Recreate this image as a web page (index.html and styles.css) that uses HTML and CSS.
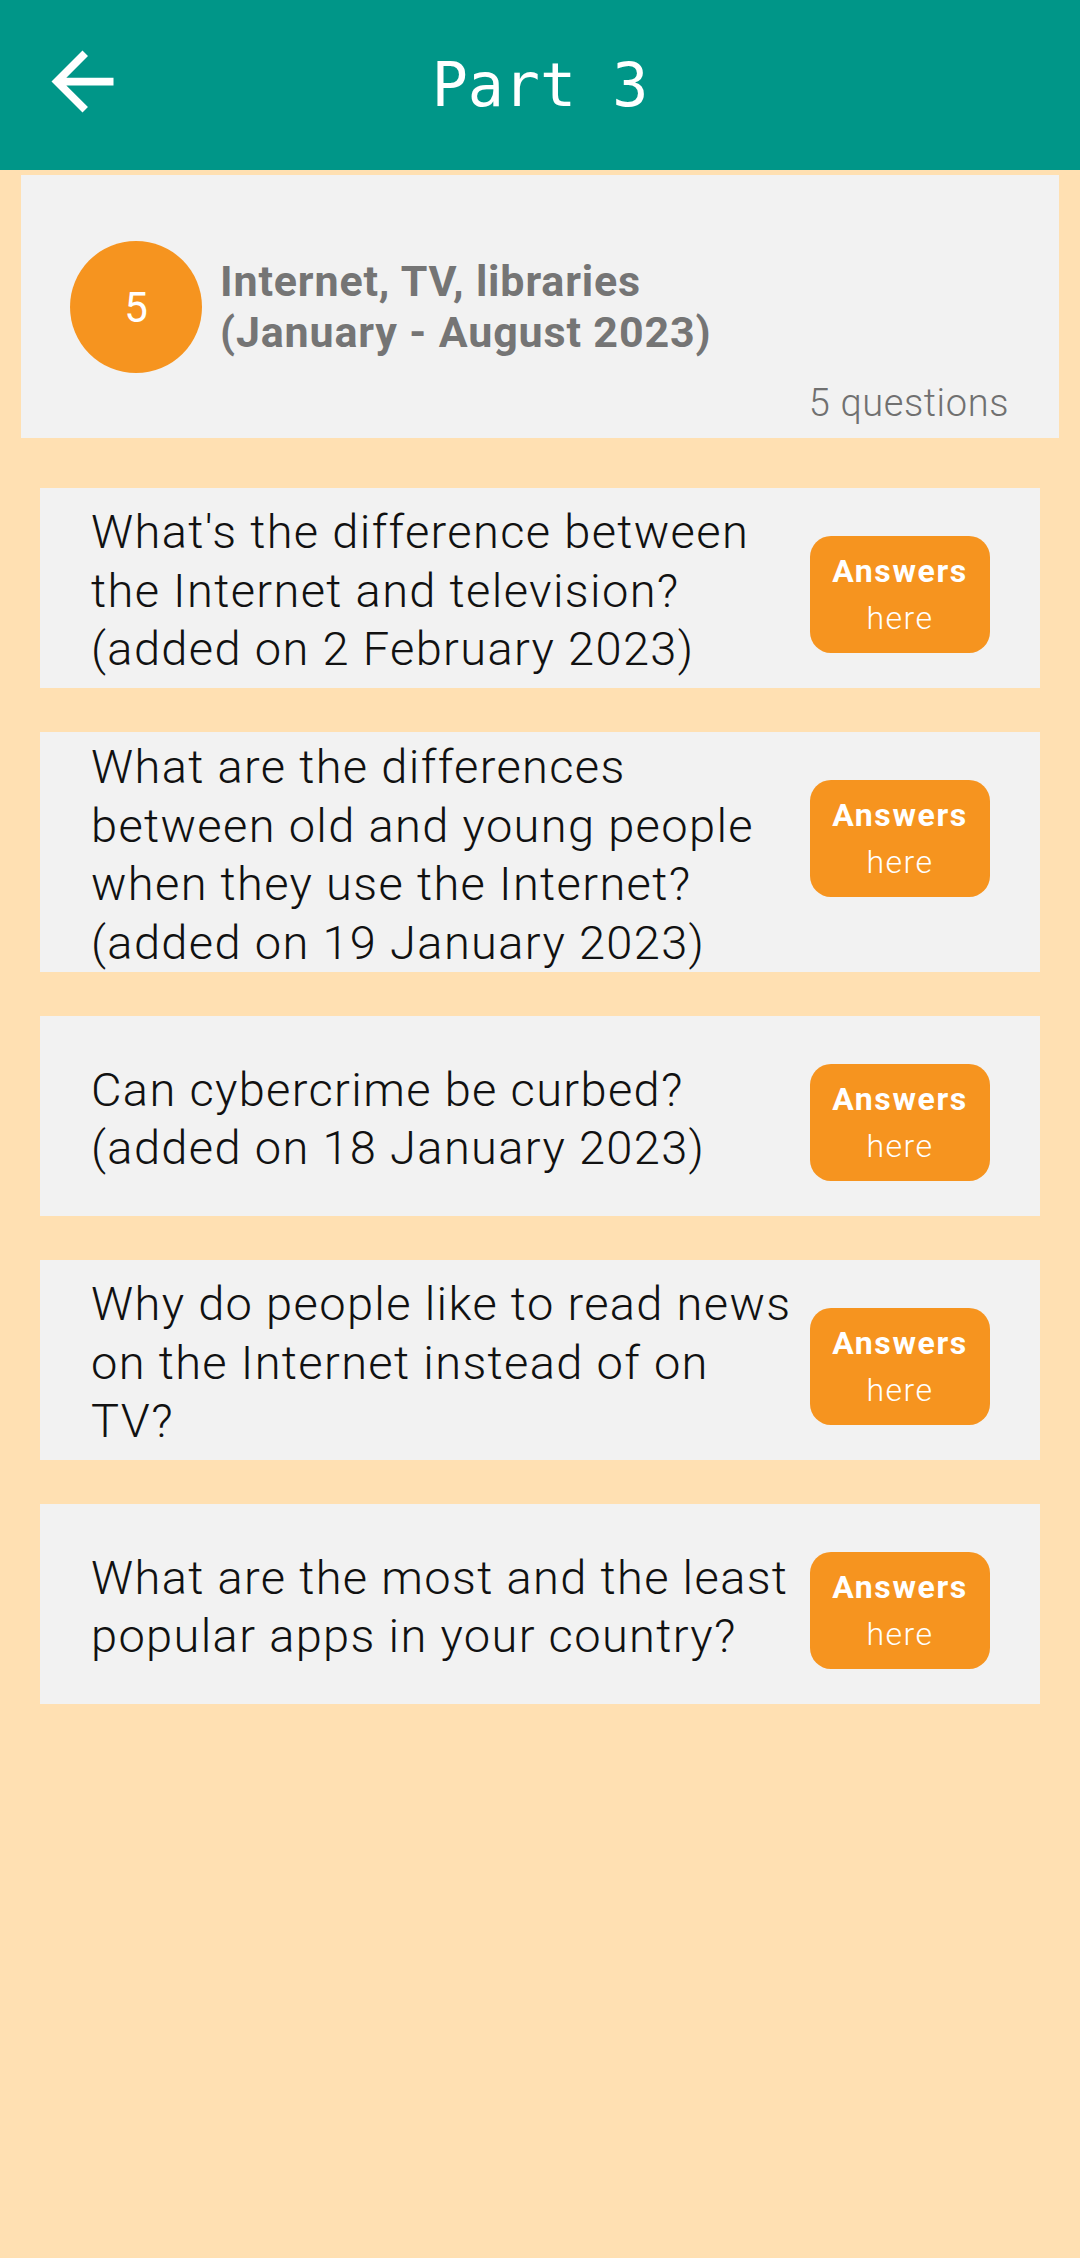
FILE: index.html
```html
<!DOCTYPE html>
<html lang="en">
<head>
<meta charset="utf-8">
<title>Part 3</title>
<link rel="stylesheet" href="styles.css">
</head>
<body>
<header class="topbar">
  <button class="back" aria-label="Back">
    <svg viewBox="0 0 24 24" width="93" height="93"><path fill="#fff" d="M20 11H7.83l5.59-5.59L12 4l-8 8 8 8 1.41-1.41L7.83 13H20v-2z"/></svg>
  </button>
  <h1 class="title">Part 3</h1>
</header>
<main class="content">
  <section class="topic">
    <div class="topic-row">
      <div class="badge">5</div>
      <div class="topic-name">Internet, TV, libraries<br>(January - August 2023)</div>
    </div>
    <div class="topic-count">5 questions</div>
  </section>
  <ul class="questions">
    <li class="q-card">
      <p class="q-text">What's the difference between<br>the Internet and television?<br>(added on 2 February 2023)</p>
      <a class="answers"><span class="a1">Answers</span><span class="a2">here</span></a>
    </li>
    <li class="q-card">
      <p class="q-text">What are the differences<br>between old and young people<br>when they use the Internet?<br>(added on 19 January 2023)</p>
      <a class="answers"><span class="a1">Answers</span><span class="a2">here</span></a>
    </li>
    <li class="q-card">
      <p class="q-text">Can cybercrime be curbed?<br>(added on 18 January 2023)</p>
      <a class="answers"><span class="a1">Answers</span><span class="a2">here</span></a>
    </li>
    <li class="q-card">
      <p class="q-text">Why do people like to read news<br>on the Internet instead of on<br>TV?</p>
      <a class="answers"><span class="a1">Answers</span><span class="a2">here</span></a>
    </li>
    <li class="q-card">
      <p class="q-text">What are the most and the least<br>popular apps in your country?</p>
      <a class="answers"><span class="a1">Answers</span><span class="a2">here</span></a>
    </li>
  </ul>
</main>
</body>
</html>
```
FILE: styles.css
```css
* { box-sizing: border-box; }
html, body {
  margin: 0;
  padding: 0;
  background: #FFE0B2;
  font-family: Roboto, "Noto Sans", sans-serif;
  min-height: 2258px;
}
.topbar {
  position: relative;
  height: 170px;
  background: #009688;
  display: flex;
  align-items: center;
  justify-content: center;
}
.back {
  position: absolute;
  left: 36px;
  top: 35px;
  width: 93px;
  height: 93px;
  padding: 0;
  border: 0;
  background: transparent;
  display: block;
}
.back svg { display: block; }
.title {
  margin: 0;
  color: #fff;
  font-family: "DejaVu Sans Mono", "Liberation Mono", monospace;
  font-weight: normal;
  font-size: 60px;
  line-height: 1;
  letter-spacing: 0;
}
.content {
  padding-top: 5px;
}
.topic {
  margin: 0 21px;
  background: #F2F2F2;
  padding: 66px 50px 13px 49px;
}
.topic-row {
  display: flex;
  align-items: center;
  gap: 18px;
}
.badge {
  width: 132px;
  height: 132px;
  flex: none;
  border-radius: 50%;
  background: #F6941F;
  color: #fff;
  font-size: 42px;
  display: flex;
  align-items: center;
  justify-content: center;
}
.topic-name {
  color: #757575;
  font-weight: 700;
  font-size: 43px;
  letter-spacing: 0.85px;
  line-height: 51px;
}
.topic-count {
  margin-top: 8px;
  text-align: right;
  color: #707070;
  font-weight: 300;
  font-size: 38px;
  letter-spacing: 0.6px;
  line-height: 44px;
}
.questions {
  list-style: none;
  margin: 50px 40px 0;
  padding: 0;
  display: flex;
  flex-direction: column;
  gap: 44px;
}
.q-card {
  background: #F2F2F2;
  min-height: 200px;
  padding: 6px 50px 0 51px;
  display: flex;
  align-items: center;
  gap: 4px;
}
.q-text {
  flex: 1;
  margin: 0;
  color: #111;
  font-weight: 300;
  font-size: 47px;
  letter-spacing: 1.35px;
  line-height: 58.5px;
}
.answers {
  align-self: flex-start;
  margin-top: 42px;
  flex: none;
  width: 180px;
  height: 117px;
  border-radius: 21px;
  background: #F6941F;
  color: #fff;
  display: flex;
  flex-direction: column;
  align-items: center;
  justify-content: center;
  font-size: 32px;
  line-height: 47px;
}
.a1 { font-weight: 700; letter-spacing: 1.6px; }
.a2 { font-weight: 300; letter-spacing: 1.4px; }
```
